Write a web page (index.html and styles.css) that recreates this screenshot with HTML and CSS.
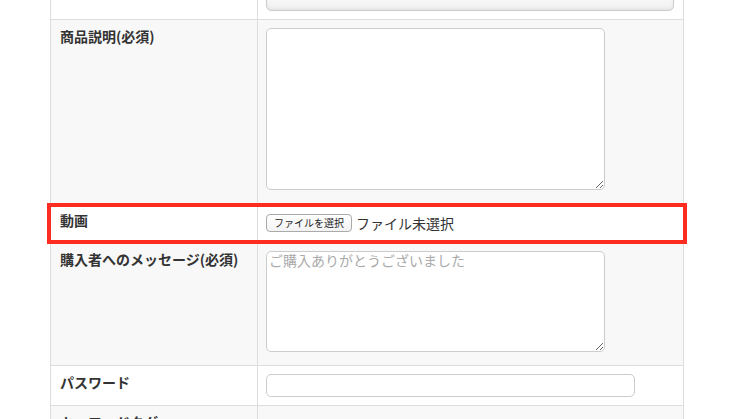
FILE: index.html
```html
<!DOCTYPE html>
<html lang="ja">
<head>
  <meta charset="UTF-8" />
  <meta name="viewport" content="width=device-width, initial-scale=1.0"/>
  <title>商品登録</title>
  <link rel="stylesheet" href="styles.css">
</head>
<body>

  <div class="form-wrap">
    <table class="form-table">
      <tr class="row-white">
        <th></th>
        <td><div class="select-box"></div></td>
      </tr>
      <tr class="row-gray">
        <th>商品説明(必須)</th>
        <td><textarea class="area-large"></textarea></td>
      </tr>
      <tr class="row-white row-file">
        <th>動画</th>
        <td>
          <div class="file-field">
            <button class="file-btn" type="button">ファイルを選択</button>
            <span class="file-name">ファイル未選択</span>
          </div>
        </td>
      </tr>
      <tr class="row-gray">
        <th>購入者へのメッセージ(必須)</th>
        <td><textarea class="area-small" placeholder="ご購入ありがとうございました"></textarea></td>
      </tr>
      <tr class="row-white">
        <th>パスワード</th>
        <td><input type="password" class="text-input"></td>
      </tr>
      <tr class="row-gray">
        <th>キーワードタグ</th>
        <td></td>
      </tr>
    </table>

    <!-- highlight around the video row -->
    <div class="highlight"></div>
  </div>

</body>
</html>
```

FILE: styles.css
```css
body {
  margin: 0;
  font-family: "Noto Sans CJK JP", "Noto Sans", sans-serif;
  color: #333;
  background: #fff;
  overflow: hidden;
}

.form-wrap {
  position: relative;
  width: 634px;
  margin: -30px 0 0 50px;
}

.form-table {
  width: 634px;
  border-collapse: collapse;
}

.form-table th,
.form-table td {
  border: 1px solid #ddd;
  padding: 8px;
  vertical-align: top;
  text-align: left;
}

.form-table th {
  width: 190px;
  padding: 6px 7px 8px 9px;
  font-size: 14px;
  font-weight: bold;
  line-height: 20px;
}

.row-white th, .row-white td {
  background-color: #fff;
}

.row-gray th, .row-gray td {
  background-color: #f8f8f8;
}

.row-file th {
  padding-top: 7px;
  line-height: 19px;
}

.select-box {
  width: 406px;
  height: 30px;
  border: 1px solid #ccc;
  border-radius: 5px;
  background: linear-gradient(#fff, #f1f1f1);
  box-shadow: inset 0 -2px 3px rgba(0, 0, 0, 0.05);
}

textarea,
.text-input {
  display: block;
  box-sizing: border-box;
  border: 1px solid #ccc;
  border-radius: 5px;
  background: #fff;
  font-family: inherit;
  font-size: 14px;
  margin: 0;
}

textarea {
  width: 339px;
  padding: 0 2px;
  line-height: 16px;
  margin-bottom: 5px;
}

textarea::placeholder {
  color: #aaa;
}

.area-large {
  height: 162px;
}

.area-small {
  height: 101px;
  margin-bottom: 5px;
}

.text-input {
  width: 369px;
  height: 23px;
  padding: 1px 2px;
}

.file-field {
  display: flex;
  align-items: center;
  height: 22px;
}

.file-btn {
  height: 18px;
  padding: 0 7px;
  border: 1px solid #aaa;
  border-radius: 4px;
  background: linear-gradient(#fff, #f3f3f3);
  font-family: inherit;
  font-size: 10px;
  color: #222;
  line-height: 16px;
}

.file-name {
  margin-left: 4px;
  font-size: 14px;
  color: #333;
}

.highlight {
  position: absolute;
  left: -3px;
  top: 233px;
  width: 632px;
  height: 33px;
  border: 4px solid #fc2d20;
  pointer-events: none;
}
```
